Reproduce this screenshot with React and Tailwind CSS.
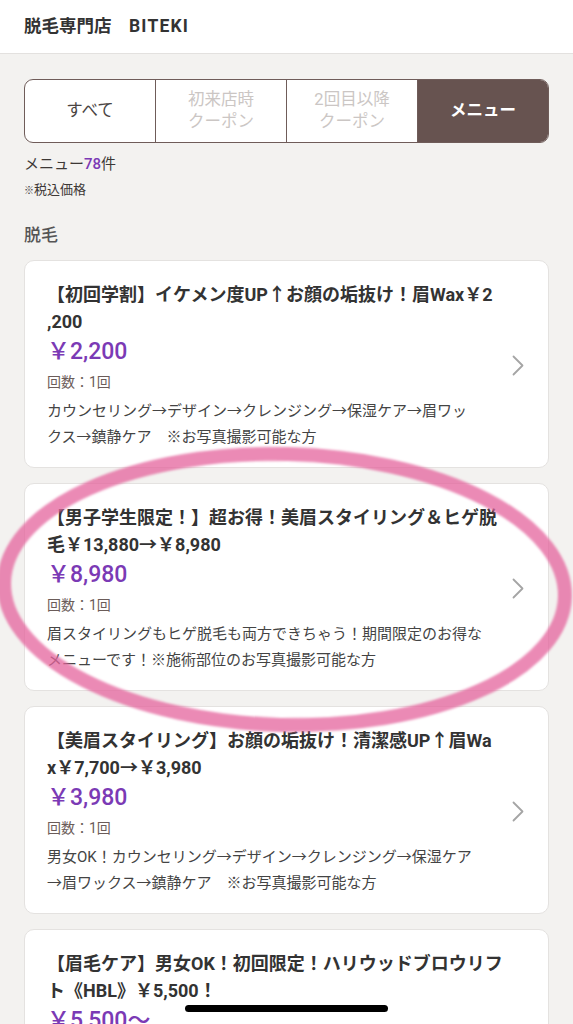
const TABS = [
  { id: 'all', lines: ['すべて'], tone: 'text-[#4a4442]' },
  { id: 'first', lines: ['初来店時', 'クーポン'], tone: 'text-[#cbc6c4]' },
  { id: 'repeat', lines: ['2回目以降', 'クーポン'], tone: 'text-[#cbc6c4]' },
  { id: 'menu', lines: ['メニュー'], active: true },
];

const MENUS = [
  {
    title: ['【初回学割】イケメン度UP↑お顔の垢抜け！眉Wax￥2', ',200'],
    price: '￥2,200',
    desc: ['カウンセリング→デザイン→クレンジング→保湿ケア→眉ワッ', 'クス→鎮静ケア　※お写真撮影可能な方'],
  },
  {
    title: ['【男子学生限定！】超お得！美眉スタイリング＆ヒゲ脱', '毛￥13,880→￥8,980'],
    price: '￥8,980',
    desc: ['眉スタイリングもヒゲ脱毛も両方できちゃう！期間限定のお得な', 'メニューです！※施術部位のお写真撮影可能な方'],
  },
  {
    title: ['【美眉スタイリング】お顔の垢抜け！清潔感UP↑眉Wa', 'x￥7,700→￥3,980'],
    price: '￥3,980',
    desc: ['男女OK！カウンセリング→デザイン→クレンジング→保湿ケア', '→眉ワックス→鎮静ケア　※お写真撮影可能な方'],
  },
  {
    title: ['【眉毛ケア】男女OK！初回限定！ハリウッドブロウリフ', 'ト《HBL》￥5,500！'],
    price: '￥5,500～',
    desc: ['眉毛の生え癖を矯正し、理想の形に整えます', '※お写真撮影可能な方'],
  },
];

export default function App() {
  return (
    <div className="relative h-[1024px] w-[573px] overflow-hidden bg-[#f3f2f0] font-[Roboto,'Noto_Sans_CJK_JP',sans-serif] text-[#333]">
      <header className="flex h-[54px] items-center border-b border-[#e3e1df] bg-white px-6 text-[17.5px] font-bold">
        脱毛専門店　<span className="tracking-[1.2px]">BITEKI</span>
      </header>

      <main className="px-6">
        <div className="mt-[25px] flex h-[64px] overflow-hidden rounded-[9px] border-[1.5px] border-[#6f5c59] bg-white">
          {TABS.map((t, i) => (
            <div
              key={t.id}
              className={
                'flex flex-1 flex-col items-center justify-center text-[16.5px] leading-[22px] ' +
                (i > 0 ? 'border-l-[1.5px] border-[#6f5c59] ' : '') +
                (t.active ? 'bg-[#675350] font-bold text-white' : t.tone)
              }
            >
              {t.lines.map((l) => (
                <span key={l}>{l}</span>
              ))}
            </div>
          ))}
        </div>

        <p className="mt-[11px] text-[15px] leading-[20px] text-[#3d3836]">
          メニュー<span className="font-medium text-[#7b3ab5]">78</span>件
        </p>
        <p className="mt-[6px] text-[13px] leading-[20px] text-[#3d3836]">
          <span className="text-[10px]">※</span>税込価格
        </p>

        <h2 className="mt-[22px] text-[17px] font-medium leading-[24px] text-[#555]">脱毛</h2>

        <div className="mt-[13px] flex flex-col gap-[15px]">
          {MENUS.map((m) => (
            <MenuCard key={m.price} menu={m} />
          ))}
        </div>
      </main>

      {/* marker circle drawn over the screenshot */}
      <svg className="pointer-events-none absolute inset-0" width="573" height="1024">
        <defs>
          <filter id="soft">
            <feGaussianBlur stdDeviation="0.8" />
          </filter>
        </defs>
        <ellipse
          cx="284.5"
          cy="589.5"
          rx="280.5"
          ry="135.5"
          fill="none"
          stroke="#e4649c"
          strokeOpacity="0.75"
          strokeWidth="14"
          filter="url(#soft)"
          transform="rotate(1.5 284.5 589.5)"
        />
      </svg>

      <div className="absolute bottom-[12px] left-[185px] h-[7px] w-[203px] rounded-full bg-black" />
    </div>
  );
}

function MenuCard({ menu }) {
  return (
    <div className="flex items-center rounded-[10px] border border-[#e4e2e0] bg-white pb-[17px] pl-[22px] pr-[23px] pt-5">
      <div className="min-w-0 flex-1">
        <div className="text-[18px] font-bold leading-[27px] text-[#333]">
          {menu.title.map((l) => (
            <div key={l} className="whitespace-nowrap">{l}</div>
          ))}
        </div>
        <div className="text-[23px] font-medium leading-[34px] text-[#7b3ab5]">{menu.price}</div>
        <div className="text-[14px] leading-[26px] text-[#6b5c59]">回数：1回</div>
        <div className="mt-[3px] text-[15px] leading-[26px] text-[#444]">
          {menu.desc.map((l) => (
            <div key={l} className="whitespace-nowrap">{l}</div>
          ))}
        </div>
      </div>
      <svg width="13" height="21" viewBox="0 0 13 21" className="shrink-0">
        <path d="M1.5 1.5 L10.5 10.5 L1.5 19.5" fill="none" stroke="#a5a5a5" strokeWidth="1.8" strokeLinecap="round" strokeLinejoin="round" />
      </svg>
    </div>
  );
}
